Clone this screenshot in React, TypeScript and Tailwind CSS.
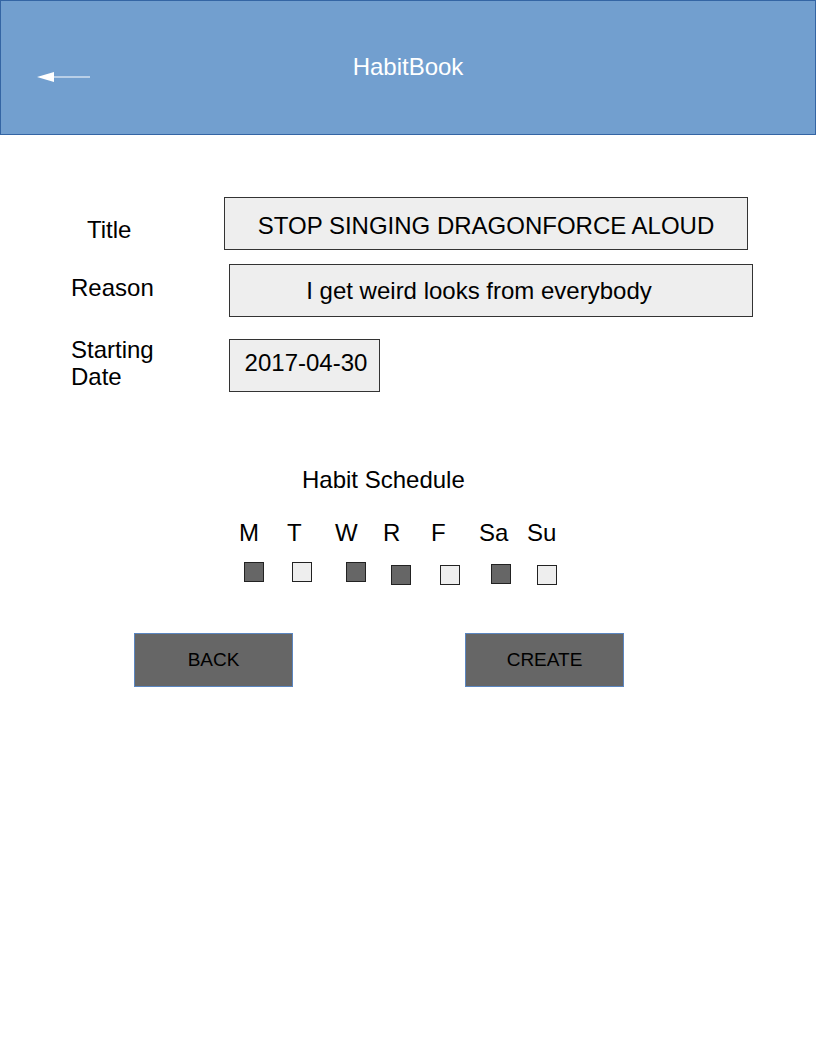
const days = [
  { label: "M", on: true, box: "ml-[244px] mt-0" },
  { label: "T", on: false, box: "ml-[28px] mt-0" },
  { label: "W", on: true, box: "ml-[34px] mt-0" },
  { label: "R", on: true, box: "ml-[25px] mt-[3px]" },
  { label: "F", on: false, box: "ml-[29px] mt-[3px]" },
  { label: "Sa", on: true, box: "ml-[31px] mt-[2px]" },
  { label: "Su", on: false, box: "ml-[26px] mt-[3px]" },
];

const BackArrow = () => (
  <svg width="56" height="14" viewBox="0 0 56 14" className="mt-[16px] ml-[37px]">
    <polygon points="1,7 18,2 18,12" fill="#ffffff" />
    <line x1="17" y1="7" x2="54" y2="7" stroke="#ffffff" strokeWidth="1.2" />
  </svg>
);

export default function App() {
  return (
    <div
      className="w-[816px] h-[1056px] bg-white text-black"
      style={{ fontFamily: '"Liberation Sans", Arial, sans-serif' }}
    >
      {/* Header */}
      <header className="relative h-[135px] bg-[#729fcf] border border-[#3465a4]">
        <div className="pt-[52px] text-center text-[24px] leading-[28px] text-white">HabitBook</div>
        <div className="absolute -left-[2px] top-[53px]">
          <BackArrow />
        </div>
      </header>

      {/* Form */}
      <div className="pt-[62px]">
        <div className="flex items-start">
          <div className="w-[224px] pl-[87px] pt-[19px] text-[24px] leading-[28px]">Title</div>
          <div className="w-[524px] h-[53px] bg-[#eeeeee] border border-[#333333] flex items-center justify-center pt-[5px] text-[24px]">
            STOP SINGING DRAGONFORCE ALOUD
          </div>
        </div>

        <div className="flex items-start mt-[14px]">
          <div className="w-[229px] pl-[71px] pt-[10px] text-[24px] leading-[28px]">Reason</div>
          <div className="w-[524px] h-[53px] bg-[#eeeeee] border border-[#333333] flex items-center justify-center pr-[24px] text-[24px]">
            I get weird looks from everybody
          </div>
        </div>

        <div className="flex items-start mt-[22px]">
          <div className="w-[229px] pl-[71px] -mt-[3px] text-[24px] leading-[27px]">
            Starting
            <br />
            Date
          </div>
          <div className="w-[151px] h-[53px] bg-[#eeeeee] border border-[#333333] flex items-center justify-center pb-[5px] pl-[3px] text-[24px]">
            2017-04-30
          </div>
        </div>
      </div>

      {/* Schedule */}
      <div className="mt-[74px] pl-[302px] text-[24px] leading-[28px]">Habit Schedule</div>

      <div className="flex mt-[25px] pl-[239px] text-[24px] leading-[28px]">
        {days.map((d) => (
          <div key={d.label} className="w-[48px]">
            {d.label}
          </div>
        ))}
      </div>

      <div className="flex items-start mt-[15px]">
        {days.map((d) => (
          <div
            key={d.label}
            className={`${d.box} w-[20px] h-[20px] border border-[#222222] ${
              d.on ? "bg-[#666666]" : "bg-[#eeeeee]"
            }`}
          />
        ))}
      </div>

      {/* Actions */}
      <div className="flex mt-[48px] pl-[134px] gap-[172px]">
        <button className="w-[159px] h-[54px] bg-[#666666] border border-[#5b86c0] text-[19px] text-black">
          BACK
        </button>
        <button className="w-[159px] h-[54px] bg-[#666666] border border-[#5b86c0] text-[19px] text-black">
          CREATE
        </button>
      </div>
    </div>
  );
}
